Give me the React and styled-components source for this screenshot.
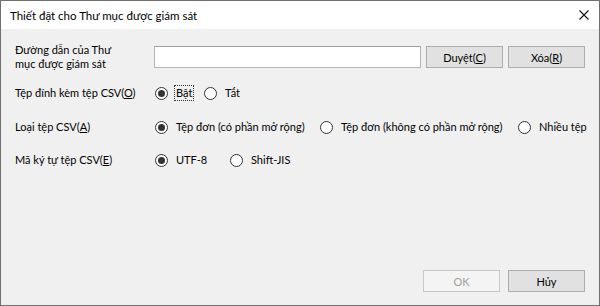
import React from "react";
import styled, { createGlobalStyle } from "styled-components";

const Global = createGlobalStyle`
	html, body {
		margin: 0;
		padding: 0;
		background: #ffffff;
	}
	* {
		box-sizing: border-box;
	}
`;

const Window = styled.div`
	width: 600px;
	height: 306px;
	border: 1px solid #6f6f6f;
	display: flex;
	flex-direction: column;
	font-family: Lato, "Liberation Sans", Arial, sans-serif;
	font-size: 11px;
	color: #000;
	background: #f0f0f0;
`;

const TitleBar = styled.div`
	height: 28px;
	background: #ffffff;
	display: flex;
	align-items: center;
	justify-content: space-between;
	padding: 0 10px 0 9px;
	.title {
		font-size: 11.5px;
	}
`;

const Body = styled.div`
	flex: 1;
	display: flex;
	flex-direction: column;
	padding: 14px 14px 13px 14px;
`;

const Row = styled.div`
	display: grid;
	grid-template-columns: 139px 1fr;
	align-items: center;
	min-height: 22px;
	margin-bottom: ${(p) => p.$after || 12}px;
	.label {
		line-height: 14px;
	}
`;

const Field = styled.div`
	display: flex;
	align-items: center;
	gap: 5px;
`;

const TextBox = styled.input`
	width: 267px;
	height: 22px;
	border: 1px solid #b4b4b4;
	border-top-color: #a0a0a0;
	background: #fff;
	outline: none;
	margin: 0;
`;

const Button = styled.button`
	width: 77px;
	height: 22px;
	margin: 0;
	padding: 0;
	font-family: inherit;
	font-size: 11px;
	color: ${(p) => (p.disabled ? "#a0a0a0" : "#000")};
	background: ${(p) => (p.disabled ? "#f4f4f4" : "#e1e1e1")};
	border: 1px solid ${(p) => (p.disabled ? "#c8c8c8" : "#adadad")};
`;

const Options = styled.div`
	display: flex;
	align-items: center;
`;

const Option = styled.label`
	display: flex;
	align-items: center;
	gap: 6px;
	flex: none;
	width: ${(p) => (p.$w ? `${p.$w}px` : "auto")};
	padding-left: 1px;
	.text {
		white-space: nowrap;
		padding: 0 1px;
		border: 1px dotted ${(p) => (p.$focus ? "#333" : "transparent")};
		line-height: 14px;
	}
`;

const Dot = styled.span`
	width: 13px;
	height: 13px;
	border-radius: 50%;
	border: 1px solid #333;
	background: #fff;
	display: flex;
	align-items: center;
	justify-content: center;
	flex: none;
	&::after {
		content: "";
		width: 7px;
		height: 7px;
		border-radius: 50%;
		background: ${(p) => (p.$on ? "#333" : "transparent")};
	}
`;

const Footer = styled.div`
	margin-top: auto;
	display: flex;
	justify-content: flex-end;
	gap: 8px;
`;

const Key = styled.u`
	text-underline-offset: 1px;
`;

const Radio = ({ on, w, focus, children }) => (
	<Option $w={w} $focus={focus}>
		<Dot $on={on} />
		<span className="text">{children}</span>
	</Option>
);

export default function App() {
	return (
		<>
			<Global />
			<Window>
				<TitleBar>
					<span className="title">Thiết đặt cho Thư mục được giám sát</span>
					<svg width="10" height="10" viewBox="0 0 10 10">
						<path d="M0.5 0.5 L9.5 9.5 M9.5 0.5 L0.5 9.5" stroke="#111" strokeWidth="1.1" />
					</svg>
				</TitleBar>
				<Body>
					<Row $after={11}>
						<span className="label">
							Đường dẫn của Thư
							<br />
							mục được giám sát
						</span>
						<Field>
							<TextBox type="text" />
							<Button>
								Duyệt(<Key>C</Key>)
							</Button>
							<Button>
								Xóa(<Key>R</Key>)
							</Button>
						</Field>
					</Row>
					<Row>
						<span className="label">
							Tệp đính kèm tệp CSV(<Key>O</Key>)
						</span>
						<Options>
							<Radio on w={49} focus>
								Bật
							</Radio>
							<Radio>Tắt</Radio>
						</Options>
					</Row>
					<Row $after={11}>
						<span className="label">
							Loại tệp CSV(<Key>A</Key>)
						</span>
						<Options>
							<Radio on w={165}>
								Tệp đơn (có phần mở rộng)
							</Radio>
							<Radio w={198}>Tệp đơn (không có phần mở rộng)</Radio>
							<Radio>Nhiều tệp</Radio>
						</Options>
					</Row>
					<Row>
						<span className="label">
							Mã ký tự tệp CSV(<Key>E</Key>)
						</span>
						<Options>
							<Radio on w={75}>
								UTF-8
							</Radio>
							<Radio>Shift-JIS</Radio>
						</Options>
					</Row>
					<Footer>
						<Button disabled>OK</Button>
						<Button>Hủy</Button>
					</Footer>
				</Body>
			</Window>
		</>
	);
}
